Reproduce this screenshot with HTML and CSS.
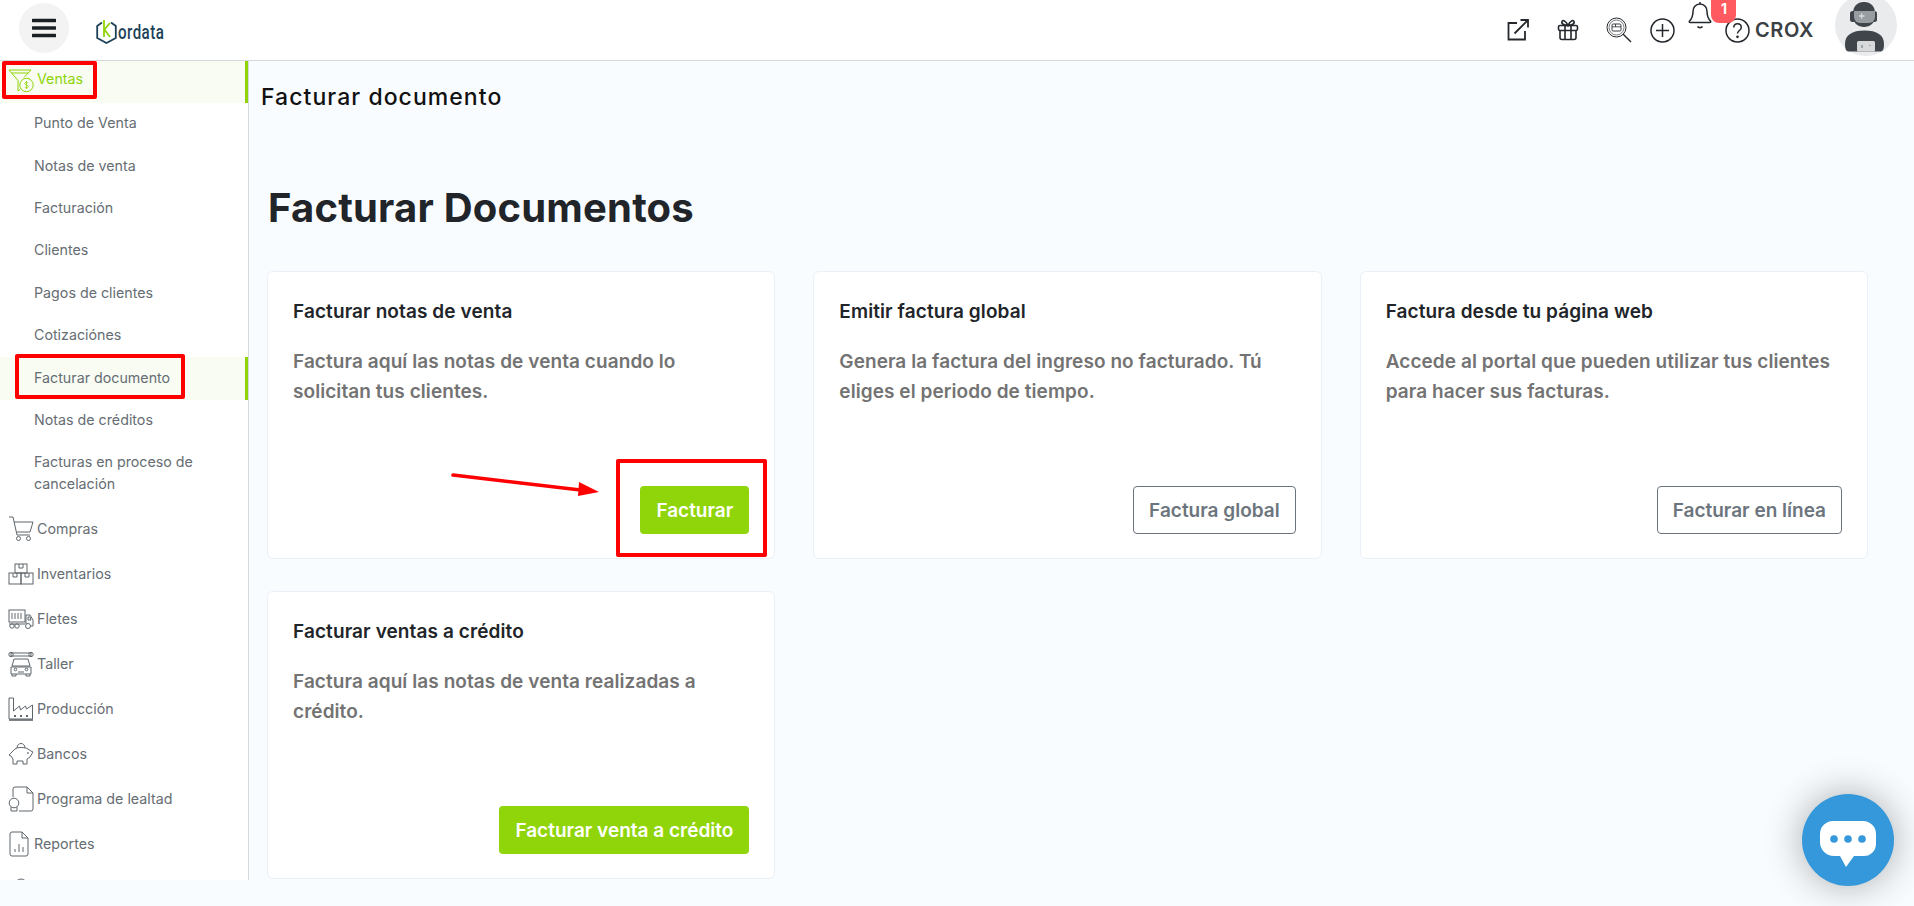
FILE: index.html
```html
<!DOCTYPE html>
<html lang="es">
<head>
  <meta charset="UTF-8">
  <meta name="viewport" content="width=device-width, initial-scale=1.0">
  <title>Facturar documento</title>
  <link rel="stylesheet" href="styles.css">
</head>
<body>
  <header class="topbar">
    <div class="topbar-left">
      <button class="menu-btn" aria-label="Menu">
        <svg width="24" height="20" viewBox="0 0 24 20"><path d="M1 2.500h22M1 10h22M1 17.500h22" stroke="#1c1f22" stroke-width="3.400" stroke-linecap="round"/></svg>
      </button>
      <div class="logo">
        <svg width="21" height="24" viewBox="0 0 21 24" fill="none"><path d="M6 2.500 1.200 6v12l9.300 5 9.300-5V6L15 2.500" stroke="#1d4258" stroke-width="1.800"/><path d="M8 0v17M14 3 8.500 9.500 14 17" stroke="#8fd40a" stroke-width="1.800"/></svg>
        <span>ordata</span>
      </div>
    </div>
    <div class="topbar-right">
      <svg class="ico-link" width="24" height="24" viewBox="0 0 24 24" fill="none" stroke="#24282c" stroke-width="1.800"><path d="M11 5H2.500v16.500H19V13"/><path d="M8.500 15.500 22 2M14.500 2H22v7.500"/></svg>
      <svg class="ico-gift" width="22" height="22" viewBox="0 0 22 22" fill="none" stroke="#24282c" stroke-width="1.600"><rect x="1.500" y="6.500" width="19" height="5" rx="1.500"/><path d="M3 11.500v7a2 2 0 0 0 2 2h12a2 2 0 0 0 2-2v-7M8 6.500v14M14 6.500v14M11 6.500C9 2 6 .500 5 2.500s2 4 6 4c4 0 7-2 6-4s-4-.500-6 4Z"/></svg>
      <svg class="ico-find" width="26" height="26" viewBox="0 0 26 26" fill="none" stroke="#24282c" stroke-width="1"><circle cx="10.500" cy="10.500" r="9.500"/><circle cx="10.500" cy="10.500" r="7.500" stroke-width=".6"/><rect x="6" y="7" width="9" height="7" rx="1.200" stroke-width=".9"/><path d="M6 9.800h9M9.500 7v2.800" stroke-width=".8"/><path d="m17 17 8 8" stroke-width="1.500"/></svg>
      <svg class="ico-plus" width="25" height="25" viewBox="0 0 25 25" fill="none" stroke="#24282c" stroke-width="1.500"><circle cx="12.500" cy="12.500" r="11.500"/><path d="M12.500 6v13M6 12.500h13"/></svg>
      <div class="bell">
        <svg width="24" height="30" viewBox="0 0 24 30" fill="none" stroke="#24282c" stroke-width="1.500"><path d="M12 3c-4.500 0-7 3.500-7 7.500 0 5-1.500 7.500-3.500 9.500-.6.7-.2 1.500.7 1.500h19.600c.9 0 1.300-.8.700-1.500-2-2-3.500-4.500-3.500-9.500C19 6.500 16.500 3 12 3ZM12 3V1"/><path d="M9.500 25.500c1 1.500 4 1.500 5 0"/></svg>
        <span class="badge">1</span>
      </div>
      <svg class="ico-help" width="25" height="25" viewBox="0 0 25 25" fill="none" stroke="#24282c" stroke-width="1.500"><circle cx="12.500" cy="12.500" r="11.500"/><path d="M8.800 9.500c0-5 7.500-5 7.500 0 0 3-3.800 3-3.800 6"/><circle cx="12.500" cy="18.800" r=".6" fill="#24282c"/></svg>
      <span class="user-name">CROX</span>
      <div class="avatar">
        <svg width="62" height="62" viewBox="0 0 62 62">
          <circle cx="31" cy="31" r="31" fill="#e9ebed"/>
          <rect x="18" y="8" width="22" height="25" rx="10" fill="#3f454b"/>
          <rect x="15" y="17" width="27" height="11" rx="2.500" fill="#3f454b"/>
          <path d="M19 17h21v6a6 6 0 0 1-6 6h-9a6 6 0 0 1-6-6Z" fill="#989da2"/>
          <path d="M24 22h5.500M26.700 19.300v5.400" stroke="#d8dadc" stroke-width="1.300"/>
          <path d="M10 50c0-9 7-13.500 19.500-13.500S49 41 49 50c0 5-1 7.500-4 7.500H14c-3 0-4-2.500-4-7.500Z" fill="#3f454b"/>
          <rect x="22" y="47" width="18" height="10.500" rx="1.500" fill="#d7d9db"/>
          <path d="M27 51v3M35 51v1" stroke="#8f9499" stroke-width="1.500"/>
        </svg>
      </div>
    </div>
  </header>

  <div class="layout">
    <aside class="sidebar">
      <a class="nav-item active">
        <svg class="nav-ico" width="26" height="24" viewBox="0 0 26 24" fill="none" stroke="#8fd40a" stroke-width="1"><path d="M1 1h22l-7 7.500M1 1l9 10.500V22l2.500-2"/><path d="M3.500 4h17"/><circle cx="18.500" cy="16" r="6.700"/><path d="M20.300 14c-.7-1-3.600-1-3.600.6s3.600 1 3.600 2.900-3 1.600-3.600.6M18.500 12v8" stroke-width=".8"/></svg>
        <span>Ventas</span>
      </a>
      <a class="sub-item">Punto de Venta</a>
      <a class="sub-item">Notas de venta</a>
      <a class="sub-item">Facturación</a>
      <a class="sub-item">Clientes</a>
      <a class="sub-item">Pagos de clientes</a>
      <a class="sub-item">Cotizaciónes</a>
      <a class="sub-item active">Facturar documento</a>
      <a class="sub-item">Notas de créditos</a>
      <a class="sub-item double">Facturas en proceso de cancelación</a>
      <a class="nav-item">
        <svg class="nav-ico" width="26" height="26" viewBox="0 0 26 26" fill="none" stroke="#5f666c" stroke-width="1"><path d="M1 1h4l4 18h13"/><path d="M6 6h19l-3 10H8.500"/><circle cx="10.500" cy="22.500" r="2"/><circle cx="20.500" cy="22.500" r="2"/></svg>
        <span>Compras</span>
      </a>
      <a class="nav-item">
        <svg class="nav-ico" width="26" height="22" viewBox="0 0 26 22" fill="none" stroke="#5f666c" stroke-width="1"><rect x="1" y="10" width="12" height="11"/><rect x="13" y="10" width="12" height="11"/><rect x="7" y="1" width="12" height="9"/><path d="M5 10v4h4v-4M17 10v4h4v-4M11 1v4h4V1"/></svg>
        <span>Inventarios</span>
      </a>
      <a class="nav-item">
        <svg class="nav-ico" width="26" height="20" viewBox="0 0 26 20" fill="none" stroke="#5f666c" stroke-width="1"><rect x="1" y="1" width="16" height="12"/><path d="M4 4v6M7 4v6M10 4v6M13 4v6M1 15h16M18 6h4l3 5v6h-2M18 6v9M20 8h2l1 3h-3Z"/><circle cx="4" cy="17" r="2.200"/><circle cx="9" cy="17" r="2.200"/><circle cx="20" cy="17" r="2.500"/></svg>
        <span>Fletes</span>
      </a>
      <a class="nav-item">
        <svg class="nav-ico" width="26" height="26" viewBox="0 0 26 26" fill="none" stroke="#5f666c" stroke-width="1"><rect x="3" y="2" width="20" height="3"/><circle cx="3" cy="3.500" r="2.200"/><circle cx="23" cy="3.500" r="2.200"/><path d="M6 8h14l2 7H4ZM3 16h20v7H3ZM4 23v2h4v-2M18 23v2h4v-2"/><circle cx="7.500" cy="18.500" r="1.300"/><circle cx="18.500" cy="18.500" r="1.300"/><path d="M10 21h6"/></svg>
        <span>Taller</span>
      </a>
      <a class="nav-item">
        <svg class="nav-ico" width="26" height="24" viewBox="0 0 26 24" fill="none" stroke="#5f666c" stroke-width="1"><path d="M1 1h4.500v13l6-5 1 4 5-4 1 3 6-4v14H1Z"/><path d="M1 23h24" stroke-width="1.600"/><path d="M6 19h2M12 19h2M18 19h2" stroke-width="2"/></svg>
        <span>Producción</span>
      </a>
      <a class="nav-item">
        <svg class="nav-ico" width="26" height="24" viewBox="0 0 26 24" fill="none" stroke="#5f666c" stroke-width="1"><path d="M7 7c2-2 10-2 13 0l3 2 2 1-3 5-3 2v5h-4v-3H9v3H5v-5l-2-3-2-1 2-2Z"/><path d="M9 6c0-6 8-6 8 0"/><circle cx="20" cy="11" r=".5"/></svg>
        <span>Bancos</span>
      </a>
      <a class="nav-item">
        <svg class="nav-ico" width="26" height="26" viewBox="0 0 26 26" fill="none" stroke="#5f666c" stroke-width="1"><path d="M5 11V3a2 2 0 0 1 2-2h12l6 6v16a2 2 0 0 1-2 2H11"/><path d="M19 1v6h6"/><circle cx="6" cy="17" r="4.800"/><path d="M3 21v4h6v-4"/></svg>
        <span>Programa de lealtad</span>
      </a>
      <a class="nav-item nav-narrow">
        <svg class="nav-ico" width="20" height="26" viewBox="0 0 20 26" fill="none" stroke="#5f666c" stroke-width="1"><path d="M3 1h10l6 6v16a2 2 0 0 1-2 2H3a2 2 0 0 1-2-2V3a2 2 0 0 1 2-2Z"/><path d="M13 1v6h6M6 21v-3M10 21v-8M14 21v-5"/></svg>
        <span>Reportes</span>
      </a>
      <a class="nav-item">
        <svg class="nav-ico" width="26" height="24" viewBox="0 0 26 24" fill="none" stroke="#5f666c" stroke-width="1"><circle cx="13" cy="8" r="6"/></svg>
      </a>
    </aside>

    <main class="content">
      <h2 class="crumb">Facturar documento</h2>
      <h1 class="page-title">Facturar Documentos</h1>
      <div class="card-grid">
        <section class="card">
          <h3>Facturar notas de venta</h3>
          <p>Factura aquí las notas de venta cuando lo solicitan tus clientes.</p>
          <a class="btn btn-green">Facturar</a>
        </section>
        <section class="card">
          <h3>Emitir factura global</h3>
          <p>Genera la factura del ingreso no facturado. Tú eliges el periodo de tiempo.</p>
          <a class="btn btn-outline">Factura global</a>
        </section>
        <section class="card">
          <h3>Factura desde tu página web</h3>
          <p>Accede al portal que pueden utilizar tus clientes para hacer sus facturas.</p>
          <a class="btn btn-outline">Facturar en línea</a>
        </section>
        <section class="card">
          <h3>Facturar ventas a crédito</h3>
          <p>Factura aquí las notas de venta realizadas a crédito.</p>
          <a class="btn btn-green">Facturar venta a crédito</a>
        </section>
      </div>
    </main>
  </div>

  <!-- marcas rojas del tutorial -->
  <div class="mark mark-ventas"></div>
  <div class="mark mark-doc"></div>
  <div class="mark mark-btn"></div>
  <svg class="mark-arrow" width="160" height="30" viewBox="0 0 160 30"><path d="M2 3 138 19" stroke="#f00" stroke-width="3.600" stroke-linecap="round"/><path d="M128 10 148 20 127 24Z" fill="#f00"/></svg>

  <div class="chat">
    <svg width="56" height="48" viewBox="0 0 56 48"><path d="M13 0h30a13 13 0 0 1 13 13v10a12 12 0 0 1-12 12H34L26 46l-6-11h-6A14 14 0 0 1 0 21v-8A13 13 0 0 1 13 0Z" fill="#fff"/><circle cx="14" cy="18" r="3.800" fill="#3498db"/><circle cx="28" cy="18" r="3.800" fill="#3498db"/><circle cx="42" cy="18" r="3.800" fill="#3498db"/></svg>
  </div>
</body>
</html>
```

FILE: styles.css
```css
* {
  margin: 0;
  padding: 0;
  box-sizing: border-box;
}

html, body {
  height: 100%;
  overflow: hidden;
}

body {
  font-family: 'Inter', sans-serif;
  background: #f9fcff;
  color: #212529;
  position: relative;
}

/* Top bar */
.topbar {
  height: 61px;
  background: #fff;
  border-bottom: 1px solid #d5d9dc;
  display: flex;
  justify-content: space-between;
  overflow: hidden;
}

.topbar-left {
  display: flex;
  align-items: center;
  padding: 0 0 4px 19px;
}

.menu-btn {
  width: 50px;
  height: 50px;
  border: 0;
  border-radius: 50%;
  background: #f3f3f3;
  display: flex;
  align-items: center;
  justify-content: center;
}

.logo {
  display: flex;
  align-items: center;
  margin-left: 27px;
  margin-top: 8px;
  color: #1d4258;
  font-family: 'Roboto', sans-serif;
  font-size: 21px;
  font-weight: 500;
}

.logo span {
  display: inline-block;
  margin-left: 1px;
  transform: scaleX(.72);
  transform-origin: left;
  letter-spacing: .6px;
}

.topbar-right {
  display: flex;
  align-items: center;
  padding-right: 17px;
  position: relative;
}

.ico-link { margin-top: -1px; }
.ico-gift { margin-left: 27px; }
.ico-find { margin-left: 27px; }
.ico-plus { margin-left: 18px; }

.bell {
  margin-left: 13px;
  margin-top: -28px;
  position: relative;
  width: 24px;
  height: 30px;
}

.badge {
  position: absolute;
  left: 23px;
  top: -3px;
  width: 25px;
  height: 25px;
  border-radius: 0 0 8px 8px;
  background: #ff5a60;
  color: #fff;
  font-size: 14px;
  font-weight: 700;
  text-align: center;
  line-height: 22px;
}

.ico-help { margin-left: 12.5px; }

.user-name {
  margin-left: 5px;
  font-size: 20px;
  font-weight: 600;
  letter-spacing: .6px;
  color: #3b4045;
}

.avatar {
  margin-left: 21px;
  margin-top: -10px;
  height: 62px;
}

/* Sidebar */
.layout {
  display: flex;
}

.sidebar {
  width: 249px;
  height: 819px;
  flex: none;
  background: #fff;
  border-right: 1px solid #d5d9dc;
  overflow: hidden;
  font-size: 14.25px;
  color: #666d73;
}

.nav-item {
  height: 45px;
  display: flex;
  align-items: center;
  padding-left: 8px;
  gap: 3px;
}

.nav-item.active {
  height: 42px;
  color: #8fd40a;
  background: #f8fcf3;
  border-right: 3px solid #8fd40a;
  padding-bottom: 7px;
}

.nav-item.active .nav-ico {
  margin-top: 5px;
}

.nav-narrow {
  padding-left: 9px;
  gap: 5px;
}

.sub-item {
  display: flex;
  align-items: center;
  height: 42.4px;
  padding: 0 20px 2px 34px;
  line-height: 22px;
}

.sub-item.double {
  height: 64px;
}

.sub-item.active {
  background: #f8fcf3;
  border-right: 3px solid #8fd40a;
}

/* Content */
.content {
  flex: 1;
  padding: 0 46px 0 18px;
}

.crumb {
  font-size: 23px;
  font-weight: 500;
  color: #111;
  letter-spacing: 1.05px;
  margin-left: -6px;
  margin-top: 21px;
  line-height: 30px;
}

.page-title {
  font-size: 40px;
  font-weight: 700;
  letter-spacing: .2px;
  margin-top: 68px;
  margin-left: 1px;
  line-height: 56px;
}

.card-grid {
  display: grid;
  grid-template-columns: repeat(3, 1fr);
  grid-auto-rows: 288px;
  column-gap: 38px;
  row-gap: 32px;
  margin-top: 35px;
}

.card {
  background: #fff;
  border: 1px solid #e9f0f7;
  border-radius: 6px;
  padding: 28px 25px 24px;
  display: flex;
  flex-direction: column;
  align-items: flex-start;
}

.card h3 {
  font-size: 19px;
  font-weight: 600;
  letter-spacing: .1px;
  line-height: 24px;
}

.card p {
  margin-top: 23px;
  font-size: 19px;
  font-weight: 600;
  letter-spacing: .07px;
  line-height: 30px;
  color: #737373;
}

.btn {
  margin-top: auto;
  align-self: flex-end;
  height: 48px;
  padding: 0 16px;
  display: flex;
  align-items: center;
  border-radius: 4px;
  font-size: 19px;
  font-weight: 600;
}

.btn-green {
  background: #8fd50a;
  color: #fff;
}

.btn-outline {
  background: #fff;
  border: 1px solid #6c757d;
  color: #6c757d;
  padding: 0 15px;
}

/* Tutorial marks, drawn over the screenshot */
.mark {
  position: absolute;
  border: 4px solid #f00;
  border-radius: 2px;
}

.mark-ventas { left: 2px; top: 61px; width: 95px; height: 38px; }
.mark-doc { left: 15px; top: 354px; width: 170px; height: 45px; }
.mark-btn { left: 616px; top: 459px; width: 151px; height: 98px; }

.mark-arrow {
  position: absolute;
  left: 451px;
  top: 472px;
}

.chat {
  position: absolute;
  left: 1802px;
  top: 794px;
  width: 92px;
  height: 92px;
  border-radius: 50%;
  background: #3498db;
  box-shadow: 0 0 38px rgba(0, 0, 0, .32);
  display: flex;
  align-items: center;
  justify-content: center;
}

.chat svg {
  margin-top: 9px;
}
```
